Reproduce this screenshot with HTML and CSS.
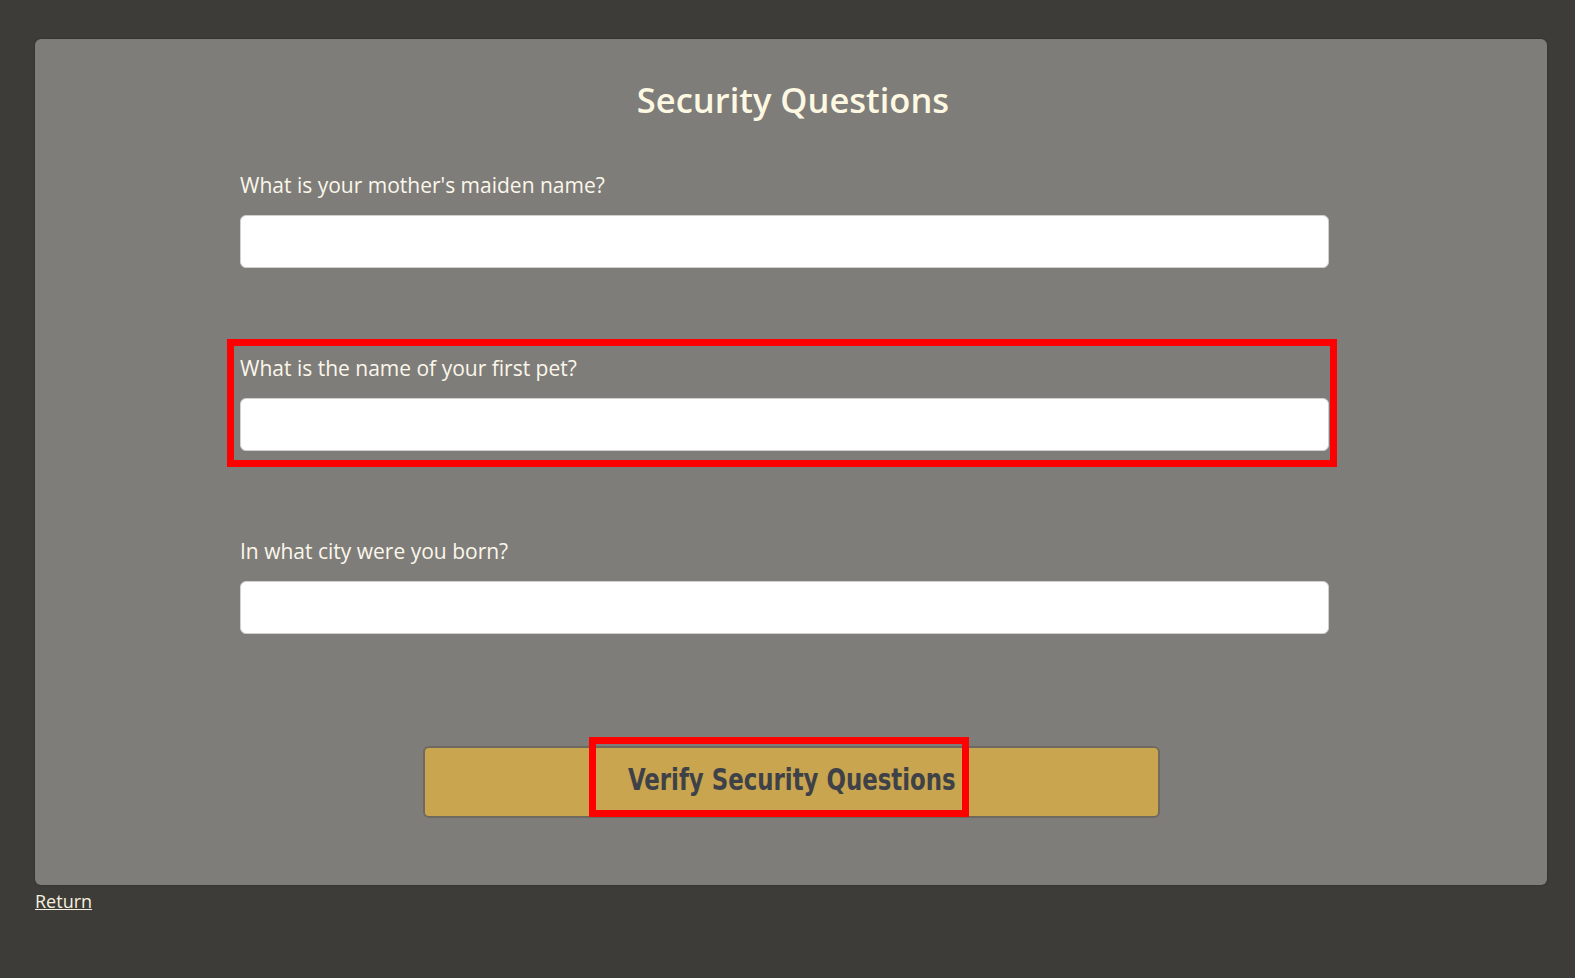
FILE: index.html
```html
<!DOCTYPE html>
<html lang="en">
<head>
<meta charset="utf-8">
<title>Security Questions</title>
<link rel="stylesheet" href="styles.css">
</head>
<body>
<div class="page">
  <form class="card">
    <h1 class="title">Security Questions</h1>
    <div class="fields">
      <div class="group">
        <label class="label" for="q1">What is your mother's maiden name?</label>
        <input class="field" id="q1" type="text">
      </div>
      <div class="group">
        <label class="label" for="q2">What is the name of your first pet?</label>
        <input class="field" id="q2" type="text">
      </div>
      <div class="group">
        <label class="label" for="q3">In what city were you born?</label>
        <input class="field" id="q3" type="text">
      </div>
    </div>
    <div class="actions">
      <button class="verify" type="button"><span class="verify-text">Verify Security Questions</span></button>
    </div>
    <div class="mark mark-field"></div>
    <div class="mark mark-button"></div>
  </form>
  <a class="return" href="#">Return</a>
</div>
</body>
</html>
```

FILE: styles.css
```css
html, body {
  margin: 0;
  padding: 0;
}

body {
  background: #3e3c38;
  font-family: "Open Sans", "Noto Sans", sans-serif;
  width: 1575px;
  height: 978px;
  overflow: hidden;
}

.page {
  padding: 39px 28px 0 35px;
}

.card {
  position: relative;
  background: #7f7d7a;
  border-radius: 6px;
  box-shadow: 0 0 2px rgba(0, 0, 0, 0.35);
  padding: 40px 0 65px 0;
  display: flex;
  flex-direction: column;
  box-sizing: border-box;
  height: 846px;
}

.title {
  margin: 0;
  text-align: center;
  font-size: 34.5px;
  line-height: 41px;
  font-weight: 600;
  color: #fdf8e2;
  padding-left: 4px;
}

.fields {
  margin-top: 53px;
  padding-left: 205px;
  display: flex;
  flex-direction: column;
  gap: 88px;
}

.group {
  display: flex;
  flex-direction: column;
  gap: 18px;
  width: 1089px;
}

.label {
  font-size: 21px;
  line-height: 24px;
  color: #fbf7ea;
}

.field {
  box-sizing: border-box;
  height: 53px;
  width: 100%;
  margin: 0;
  background: #ffffff;
  border: 1px solid #d2d0cc;
  border-radius: 6px;
  font-size: 18px;
  padding: 0 12px;
}

.actions {
  margin-top: 112px;
  display: flex;
  justify-content: center;
  padding-left: 1px;
}

.verify {
  box-sizing: border-box;
  width: 737px;
  height: 72px;
  background: #c8a54e;
  border: 2px solid #6e6a60;
  border-radius: 6px;
  display: flex;
  align-items: center;
  justify-content: center;
  padding: 0;
}

.verify-text {
  display: inline-block;
  font-family: "DejaVu Sans Condensed", "DejaVu Sans", sans-serif;
  font-stretch: condensed;
  font-weight: 700;
  font-size: 31px;
  line-height: 34px;
  color: #3e4148;
  transform: scaleX(0.82);
  margin-top: -6px;
}

.mark {
  position: absolute;
  border: 7px solid #ff0000;
  box-sizing: border-box;
  pointer-events: none;
}

.mark-field {
  left: 192px;
  top: 300px;
  width: 1110px;
  height: 128px;
}

.mark-button {
  left: 554px;
  top: 698px;
  width: 380px;
  height: 80px;
}

.return {
  display: inline-block;
  margin-top: 6px;
  font-size: 18px;
  line-height: 20px;
  color: #f5f0df;
  text-decoration: underline;
}
```
